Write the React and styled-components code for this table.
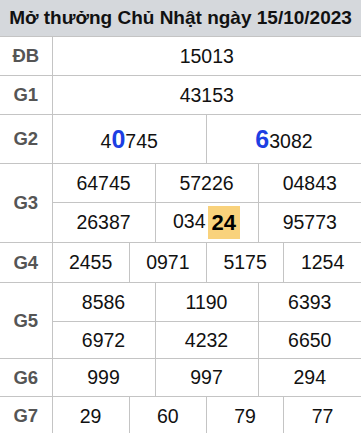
import React from "react";
import styled, { createGlobalStyle } from "styled-components";

const Global = createGlobalStyle`
  html, body { margin: 0; padding: 0; background: #fff; }
  body { font-family: "Liberation Sans", Arial, sans-serif; }
`;

const Wrap = styled.div`
  width: 361px;
  overflow: hidden;
`;

const Title = styled.div`
  height: 37px;
  background: #d5d8dc;
  display: flex;
  align-items: center;
  justify-content: center;
  font-size: 19px;
  font-weight: bold;
  color: #111;
  border-bottom: 1px solid #c4c4c4;
  box-sizing: border-box;
`;

const Table = styled.table`
  width: 361px;
  border-collapse: collapse;
  table-layout: fixed;
`;

const Label = styled.td`
  width: 52px;
  border: 1px solid #c4c4c4;
  border-left: none;
  border-top: none;
  text-align: center;
  font-weight: bold;
  font-size: 18.5px;
  color: #555;
  padding: 0;
`;

const Cell = styled.td`
  border: 1px solid #c4c4c4;
  border-top: none;
  text-align: center;
  font-size: 19.5px;
  color: #111;
  padding: 0;
  height: ${(p) => p.$h || 38}px;
  white-space: nowrap;
  &:last-child { border-right: none; }
`;

const Blue = styled.span`
  color: #1d3fe3;
  font-weight: bold;
  font-size: 25px;
`;

const Mark = styled.span`
  display: inline-block;
  background: #f9d27c;
  color: #000;
  font-weight: bold;
  font-size: 22px;
  line-height: 33px;
  padding: 0 4px;
  vertical-align: middle;
  margin-left: 2px;
`;

const Col = styled.col`
  width: ${(p) => (p.$w ? `${p.$w}px` : "auto")};
`;

const rows = [
  { label: "ĐB", lines: [[["15013"]]] },
  { label: "G1", lines: [[["43153"]]] },
  {
    label: "G2",
    h: 48,
    lines: [[[<>4<Blue>0</Blue>745</>], [<><Blue>6</Blue>3082</>]]],
  },
  {
    label: "G3",
    lines: [
      [["64745"], ["57226"], ["04843"]],
      [["26387"], [<>034<Mark>24</Mark></>], ["95773"]],
    ],
    hs: [38, 39],
  },
  { label: "G4", h: 39, lines: [[["2455"], ["0971"], ["5175"], ["1254"]]] },
  {
    label: "G5",
    lines: [
      [["8586"], ["1190"], ["6393"]],
      [["6972"], ["4232"], ["6650"]],
    ],
    hs: [38, 36],
  },
  { label: "G6", h: 37, lines: [[["999"], ["997"], ["294"]]] },
  { label: "G7", lines: [[["29"], ["60"], ["79"], ["77"]]] },
];

export default function App() {
  return (
    <Wrap>
      <Global />
      <Title>Mở thưởng Chủ Nhật ngày 15/10/2023</Title>
      <Table>
        <colgroup>
          <Col $w={52} />
          {Array.from({ length: 12 }).map((_, i) => (
            <Col key={i} />
          ))}
        </colgroup>
        <tbody>
          {rows.map((r) =>
            r.lines.map((line, li) => (
              <tr key={r.label + li}>
                {li === 0 && <Label rowSpan={r.lines.length}>{r.label}</Label>}
                {line.map((c, ci) => (
                  <Cell
                    key={ci}
                    colSpan={12 / line.length}
                    $h={r.hs ? r.hs[li] : r.h}
                  >
                    {c[0]}
                  </Cell>
                ))}
              </tr>
            ))
          )}
        </tbody>
      </Table>
    </Wrap>
  );
}
